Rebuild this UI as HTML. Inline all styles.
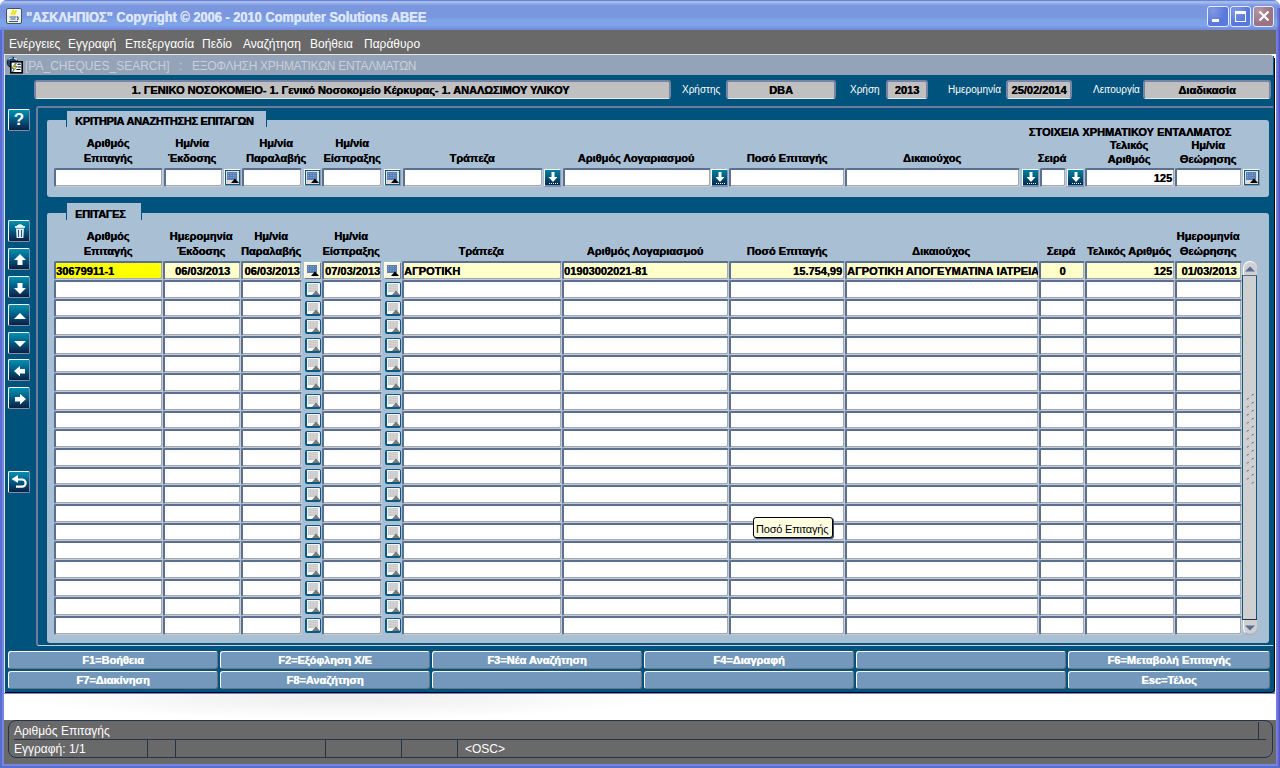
<!DOCTYPE html><html><head><meta charset="utf-8"><style>
*{margin:0;padding:0;box-sizing:border-box}
html,body{width:1280px;height:768px;overflow:hidden;background:#fff;font-family:"Liberation Sans",sans-serif}
div,svg{position:absolute}
.lb{font-weight:bold;font-size:11px;color:#000;white-space:nowrap;line-height:13px;text-shadow:0.35px 0 0 #000}
.wl{font-size:10px;color:#fff;white-space:nowrap;line-height:13px}
.fld{border-top:2px solid #5B6F92;border-left:2px solid #5B6F92;border-right:1px solid #CACACA;border-bottom:1px solid #CACACA;border-radius:2px;box-shadow:inset -1px -1px 0 #9AAAC0}
.ft{left:0;right:0;top:2px;font-weight:bold;font-size:11px;line-height:13px;white-space:nowrap;color:#000;overflow:hidden;text-shadow:0.35px 0 0 #000}
.gf{border:2px solid #7884A6;border-bottom:1px solid #E8E8E8;border-radius:3px;background:#C0C0C0}
.btn{background:#7398BC;border-top:1px solid #fff;border-left:1px solid #fff;border-right:1px solid #6A7484;border-bottom:1px solid #6A7484;border-radius:3px;color:#fff;font-weight:bold;font-size:11px;text-align:center;line-height:17px;white-space:nowrap;text-shadow:0.35px 0 0 #fff}
.menu{font-size:12px;color:#fff;white-space:nowrap;line-height:14px}
.tb{left:8px;width:22px;height:22px;border-top:1px solid #fff;border-left:1px solid #fff;border-right:1px solid #8090A8;border-bottom:1px solid #8090A8;border-radius:2px;background:linear-gradient(#0090B0 0%,#006088 45%,#0A3058 85%,#0A2040 100%)}
</style></head><body>
<div style="left:0;top:0;width:1280px;height:768px;background:#7088DE;border-radius:7px 7px 0 0"></div>
<div style="left:0;top:30px;width:2px;height:738px;background:#5A6CD0"></div>
<div style="left:1276px;top:6px;width:4px;height:762px;background:linear-gradient(to right,#7888E0,#6A70D8 50%,#5048C0)"></div>
<div style="left:0;top:766px;width:1280px;height:2px;background:#5A6CD0"></div>
<div style="left:0;top:0;width:1280px;height:30px;border-radius:7px 7px 0 0;background:linear-gradient(to bottom,#6585DA 0px,#6585DA 1px,#A2B9E9 1px,#A2B9E9 3px,#8AA6E5 4px,#7A96DF 6px,#7A96DF 17px,#7FA3E7 20px,#7FA3E7 26px,#7890E2 28px,#7088E0 30px)"></div>
<div style="left:1277px;top:8px;width:3px;height:22px;background:linear-gradient(to right,rgba(80,72,192,0.2),rgba(80,72,192,0.8))"></div>
<div style="left:6px;top:8px;width:16px;height:16px;background:linear-gradient(#FAFAFA,#ECECE4);border:1px solid #3A5A5A;border-radius:2px"></div>
<svg style="left:7px;top:9px" width="14" height="14"><path d="M6.5 1.5L4.5 5M9 2L7 5.5" stroke="#F0E000" stroke-width="1.8" stroke-linecap="round"/><path d="M2.5 8h7M3.5 10h5M2 12.5h9" stroke="#3A5A8A" stroke-width="1"/><path d="M10 7.5q2.5 1.5 0 3.5" stroke="#3A5A8A" stroke-width="1.2" fill="none"/></svg>
<div class="title" style="left:26px;top:9px;font-weight:bold;font-size:14px;letter-spacing:0px;transform:scaleX(0.915);transform-origin:0 0;color:#DCE6F8;white-space:nowrap;line-height:17px;text-shadow:0.4px 0 0 #DCE6F8">"ΑΣΚΛΗΠΙΟΣ" Copyright © 2006 - 2010 Computer Solutions ABEE</div>
<div style="left:1207px;top:6px;width:22px;height:21px;background:radial-gradient(circle at 25% 20%,rgba(255,255,255,0.25),rgba(255,255,255,0) 60%),#5878DC;border:1px solid #E4ECFF;border-radius:3px"></div>
<div style="left:1230px;top:6px;width:21px;height:21px;background:radial-gradient(circle at 25% 20%,rgba(255,255,255,0.25),rgba(255,255,255,0) 60%),#5878DC;border:1px solid #E4ECFF;border-radius:3px"></div>
<div style="left:1253px;top:6px;width:21px;height:21px;background:radial-gradient(circle at 25% 20%,rgba(255,255,255,0.25),rgba(255,255,255,0) 60%),#9A7482;border:1px solid #E4ECFF;border-radius:3px"></div>
<div style="left:1212px;top:19px;width:7px;height:3px;background:#fff"></div>
<div style="left:1235px;top:11px;width:11px;height:11px;border:1px solid #fff;border-top-width:3px"></div>
<svg style="left:1258px;top:10px" width="12" height="12"><path d="M1.5 1.5L10.5 10.5M10.5 1.5L1.5 10.5" stroke="#fff" stroke-width="2"/></svg>
<div style="left:4px;top:30px;width:1272px;height:24px;background:#696969"></div>
<div class="menu" style="left:9px;top:37px;">Ενέργειες</div>
<div class="menu" style="left:68px;top:37px;">Εγγραφή</div>
<div class="menu" style="left:125px;top:37px;">Επεξεργασία</div>
<div class="menu" style="left:202px;top:37px;">Πεδίο</div>
<div class="menu" style="left:243px;top:37px;">Αναζήτηση</div>
<div class="menu" style="left:310px;top:37px;">Βοήθεια</div>
<div class="menu" style="left:364px;top:37px;">Παράθυρο</div>
<div style="left:4px;top:54px;width:1272px;height:21px;background:#fff"></div><div style="left:4px;top:54px;width:1269px;height:21px;background:#94A3B8;border-top:1px solid #E4E4E4;border-left:1px solid #E4E4E4;border-radius:0 3px 0 0"></div><div style="left:1273px;top:56px;width:1px;height:20px;background:#005880"></div><div style="left:1274px;top:58px;width:1px;height:18px;background:#000"></div>
<svg style="left:6px;top:56px" width="18" height="18"><circle cx="6.5" cy="6.5" r="5.3" fill="#1A4A7A" stroke="#000" stroke-width="0.8"/><path d="M2.5 3.5q2 -2 4 -1.5M8 2q2 0.5 3 2" stroke="#C8D8F0" stroke-width="1.4" fill="none"/><rect x="4.8" y="5.8" width="11.4" height="11" fill="#fff" stroke="#000" stroke-width="1.6"/><path d="M9.5 7L5.5 12.5H8L6.5 16L11 10.5H8.5L10.5 7Z" fill="#F0F000" stroke="#1A3A8A" stroke-width="0.6"/><path d="M11.5 8.5h3M11.5 11h3.5M10.5 13.5h4" stroke="#000" stroke-width="1"/><rect x="12" y="7.5" width="2.5" height="1.5" fill="#1A4A8A"/></svg>
<div class="menu" style="left:25px;top:59px;color:#C8CFDA">[PA_CHEQUES_SEARCH]</div>
<div class="menu" style="left:179px;top:59px;color:#C8CFDA">:</div>
<div class="menu" style="left:192px;top:59px;color:#C8CFDA;letter-spacing:-0.3px">ΕΞΟΦΛΗΣΗ ΧΡΗΜΑΤΙΚΩΝ ΕΝΤΑΛΜΑΤΩΝ</div>
<div style="left:5px;top:75px;width:1270px;height:618px;background:#00537C;border-right:1px solid #000;border-bottom:1px solid #000;border-radius:0 0 4px 0"></div>
<div style="left:4px;top:75px;width:1px;height:618px;background:#E4DCD8"></div>
<div style="left:1275px;top:54px;width:1px;height:640px;background:#fff"></div>
<div class="gf" style="left:34px;top:80px;width:637px;height:19px"><div class="lb" style="left:0;right:0;top:2px;text-align:center"><span style="letter-spacing:-0.04px;position:relative;left:-2px">1. ΓΕΝΙΚΟ ΝΟΣΟΚΟΜΕΙΟ- 1. Γενικό Νοσοκομείο Κέρκυρας- 1. ΑΝΑΛΩΣΙΜΟΥ ΥΛΙΚΟΥ</span></div></div>
<div class="wl" style="left:682px;top:83px;">Χρήστης</div>
<div class="gf" style="left:726px;top:80px;width:110px;height:19px"><div class="lb" style="left:0;right:0;top:2px;text-align:center">DBA</div></div>
<div class="wl" style="left:850px;top:83px;">Χρήση</div>
<div class="gf" style="left:886px;top:80px;width:42px;height:19px"><div class="lb" style="left:0;right:0;top:2px;text-align:center">2013</div></div>
<div class="wl" style="left:948px;top:83px;">Ημερομηνία</div>
<div class="gf" style="left:1006px;top:80px;width:66px;height:19px"><div class="lb" style="left:0;right:0;top:2px;text-align:center">25/02/2014</div></div>
<div class="wl" style="left:1093px;top:83px;">Λειτουργία</div>
<div class="gf" style="left:1143px;top:80px;width:128px;height:19px"><div class="lb" style="left:0;right:0;top:2px;text-align:center">Διαδικασία</div></div>
<div style="left:36px;top:106px;width:1237px;height:540px;border:2px solid #6E7C9C;border-right:none;border-bottom:1px solid #C8CCD4;border-radius:3px 0 0 3px"></div>
<div style="left:47px;top:120px;width:1222px;height:77px;background:#A9BFD4;border-radius:2px 3px 3px 3px"></div>
<div style="left:67px;top:111px;width:199px;height:11px;background:#A9BFD4"></div>
<div class="lb" style="left:75px;top:115px;letter-spacing:-0.3px">ΚΡΙΤΗΡΙΑ ΑΝΑΖΗΤΗΣΗΣ ΕΠΙΤΑΓΩΝ</div>
<div style="left:66px;top:120px;width:1px;height:7px;background:#00537C"></div>
<div style="left:266px;top:120px;width:1px;height:7px;background:#00537C"></div>
<div style="left:47px;top:213px;width:1222px;height:430px;background:#A9BFD4;border-radius:2px 3px 3px 3px"></div>
<div style="left:67px;top:203px;width:74px;height:12px;background:#A9BFD4"></div>
<div class="lb" style="left:75px;top:208px;letter-spacing:-0.3px">ΕΠΙΤΑΓΕΣ</div>
<div style="left:66px;top:213px;width:1px;height:7px;background:#00537C"></div>
<div style="left:141px;top:213px;width:1px;height:7px;background:#00537C"></div>
<div class="lb" style="left:-12.0px;top:137px;width:240px;text-align:center">Αριθμός</div>
<div class="lb" style="left:-12.0px;top:152px;width:240px;text-align:center">Επιταγής</div>
<div class="lb" style="left:72.0px;top:137px;width:240px;text-align:center">Ημ/νία</div>
<div class="lb" style="left:72.0px;top:152px;width:240px;text-align:center">Έκδοσης</div>
<div class="lb" style="left:156.0px;top:137px;width:240px;text-align:center">Ημ/νία</div>
<div class="lb" style="left:156.0px;top:152px;width:240px;text-align:center">Παραλαβής</div>
<div class="lb" style="left:232.0px;top:137px;width:240px;text-align:center">Ημ/νία</div>
<div class="lb" style="left:232.0px;top:152px;width:240px;text-align:center">Είσπραξης</div>
<div class="lb" style="left:352.0px;top:152px;width:240px;text-align:center">Τράπεζα</div>
<div class="lb" style="left:516.0px;top:152px;width:240px;text-align:center">Αριθμός Λογαριασμού</div>
<div class="lb" style="left:667.0px;top:152px;width:240px;text-align:center">Ποσό Επιταγής</div>
<div class="lb" style="left:812.0px;top:152px;width:240px;text-align:center">Δικαιούχος</div>
<div class="lb" style="left:932.0px;top:152px;width:240px;text-align:center">Σειρά</div>
<div class="lb" style="left:1000.0px;top:126px;width:260px;text-align:center">ΣΤΟΙΧΕΙΑ ΧΡΗΜΑΤΙΚΟΥ ΕΝΤΑΛΜΑΤΟΣ</div>
<div class="lb" style="left:1009.0px;top:139px;width:240px;text-align:center">Τελικός</div>
<div class="lb" style="left:1009.0px;top:153px;width:240px;text-align:center">Αριθμός</div>
<div class="lb" style="left:1088.0px;top:139px;width:240px;text-align:center">Ημ/νία</div>
<div class="lb" style="left:1088.0px;top:153px;width:240px;text-align:center">Θεώρησης</div>
<div class="fld" style="left:54px;top:168px;width:109px;height:19px;background:#fff"><div class="ft" style="text-align:left;padding-left:0px"></div></div>
<div class="fld" style="left:164px;top:168px;width:59px;height:19px;background:#fff"><div class="ft" style="text-align:left;padding-left:0px"></div></div>
<div style="left:224px;top:169px;width:17px;height:17px;border-top:1px solid #fff;border-left:1px solid #fff;border-right:1px solid #8898B0;border-bottom:1px solid #8898B0;background:#0A5A80"><div style="left:1px;top:1px;width:13px;height:13px;background:#E4DCD4"><div style="left:1px;top:1px;width:10px;height:8px;background:#5A7EB8"></div><svg style="left:2px;top:2px" width="8" height="6"><path d="M0.5 0v6M3 0v6M5.5 0v6M8 0v6" stroke="#A8C0E0" stroke-width="0.6" stroke-dasharray="1 1"/></svg><svg style="left:5px;top:7px" width="8" height="5"><path d="M0 5L4 0.5L8 5Z" fill="#000"/></svg></div></div>
<div class="fld" style="left:242px;top:168px;width:60px;height:19px;background:#fff"><div class="ft" style="text-align:left;padding-left:0px"></div></div>
<div style="left:304px;top:169px;width:17px;height:17px;border-top:1px solid #fff;border-left:1px solid #fff;border-right:1px solid #8898B0;border-bottom:1px solid #8898B0;background:#0A5A80"><div style="left:1px;top:1px;width:13px;height:13px;background:#E4DCD4"><div style="left:1px;top:1px;width:10px;height:8px;background:#5A7EB8"></div><svg style="left:2px;top:2px" width="8" height="6"><path d="M0.5 0v6M3 0v6M5.5 0v6M8 0v6" stroke="#A8C0E0" stroke-width="0.6" stroke-dasharray="1 1"/></svg><svg style="left:5px;top:7px" width="8" height="5"><path d="M0 5L4 0.5L8 5Z" fill="#000"/></svg></div></div>
<div class="fld" style="left:322px;top:168px;width:60px;height:19px;background:#fff"><div class="ft" style="text-align:left;padding-left:0px"></div></div>
<div style="left:384px;top:169px;width:17px;height:17px;border-top:1px solid #fff;border-left:1px solid #fff;border-right:1px solid #8898B0;border-bottom:1px solid #8898B0;background:#0A5A80"><div style="left:1px;top:1px;width:13px;height:13px;background:#E4DCD4"><div style="left:1px;top:1px;width:10px;height:8px;background:#5A7EB8"></div><svg style="left:2px;top:2px" width="8" height="6"><path d="M0.5 0v6M3 0v6M5.5 0v6M8 0v6" stroke="#A8C0E0" stroke-width="0.6" stroke-dasharray="1 1"/></svg><svg style="left:5px;top:7px" width="8" height="5"><path d="M0 5L4 0.5L8 5Z" fill="#000"/></svg></div></div>
<div class="fld" style="left:403px;top:168px;width:140px;height:19px;background:#fff"><div class="ft" style="text-align:left;padding-left:0px"></div></div>
<div style="left:544px;top:169px;width:17px;height:18px;border-top:1px solid #fff;border-left:1px solid #fff;border-right:1px solid #8898B0;border-bottom:2px solid #7890B0;background:linear-gradient(#0080A0,#005878 50%,#002850)"><svg style="left:1px;top:1px" width="14" height="14"><path d="M5.5 1h3v5h3l-4.5 5l-4.5-5h3z" fill="#fff"/><path d="M3 12.5h9" stroke="#fff" stroke-width="1" stroke-dasharray="1 1"/></svg></div>
<div class="fld" style="left:563px;top:168px;width:148px;height:19px;background:#fff"><div class="ft" style="text-align:left;padding-left:0px"></div></div>
<div style="left:711px;top:169px;width:17px;height:18px;border-top:1px solid #fff;border-left:1px solid #fff;border-right:1px solid #8898B0;border-bottom:2px solid #7890B0;background:linear-gradient(#0080A0,#005878 50%,#002850)"><svg style="left:1px;top:1px" width="14" height="14"><path d="M5.5 1h3v5h3l-4.5 5l-4.5-5h3z" fill="#fff"/><path d="M3 12.5h9" stroke="#fff" stroke-width="1" stroke-dasharray="1 1"/></svg></div>
<div class="fld" style="left:729px;top:168px;width:116px;height:19px;background:#fff"><div class="ft" style="text-align:left;padding-left:0px"></div></div>
<div class="fld" style="left:845px;top:168px;width:175px;height:19px;background:#fff"><div class="ft" style="text-align:left;padding-left:0px"></div></div>
<div style="left:1022px;top:169px;width:17px;height:18px;border-top:1px solid #fff;border-left:1px solid #fff;border-right:1px solid #8898B0;border-bottom:2px solid #7890B0;background:linear-gradient(#0080A0,#005878 50%,#002850)"><svg style="left:1px;top:1px" width="14" height="14"><path d="M5.5 1h3v5h3l-4.5 5l-4.5-5h3z" fill="#fff"/><path d="M3 12.5h9" stroke="#fff" stroke-width="1" stroke-dasharray="1 1"/></svg></div>
<div class="fld" style="left:1040px;top:168px;width:26px;height:19px;background:#fff"><div class="ft" style="text-align:left;padding-left:0px"></div></div>
<div style="left:1067px;top:169px;width:17px;height:18px;border-top:1px solid #fff;border-left:1px solid #fff;border-right:1px solid #8898B0;border-bottom:2px solid #7890B0;background:linear-gradient(#0080A0,#005878 50%,#002850)"><svg style="left:1px;top:1px" width="14" height="14"><path d="M5.5 1h3v5h3l-4.5 5l-4.5-5h3z" fill="#fff"/><path d="M3 12.5h9" stroke="#fff" stroke-width="1" stroke-dasharray="1 1"/></svg></div>
<div class="fld" style="left:1085px;top:168px;width:90px;height:19px;background:#fff"><div class="ft" style="text-align:right;padding-right:2px">125</div></div>
<div class="fld" style="left:1175px;top:168px;width:67px;height:19px;background:#fff"><div class="ft" style="text-align:left;padding-left:0px"></div></div>
<div style="left:1243px;top:169px;width:17px;height:17px;border-top:1px solid #fff;border-left:1px solid #fff;border-right:1px solid #8898B0;border-bottom:1px solid #8898B0;background:#0A5A80"><div style="left:1px;top:1px;width:13px;height:13px;background:#E4DCD4"><div style="left:1px;top:1px;width:10px;height:8px;background:#5A7EB8"></div><svg style="left:2px;top:2px" width="8" height="6"><path d="M0.5 0v6M3 0v6M5.5 0v6M8 0v6" stroke="#A8C0E0" stroke-width="0.6" stroke-dasharray="1 1"/></svg><svg style="left:5px;top:7px" width="8" height="5"><path d="M0 5L4 0.5L8 5Z" fill="#000"/></svg></div></div>
<div class="lb" style="left:-12.0px;top:230px;width:240px;text-align:center">Αριθμός</div>
<div class="lb" style="left:-12.0px;top:245px;width:240px;text-align:center">Επιταγής</div>
<div class="lb" style="left:81.0px;top:230px;width:240px;text-align:center">Ημερομηνία</div>
<div class="lb" style="left:81.0px;top:245px;width:240px;text-align:center">Έκδοσης</div>
<div class="lb" style="left:151.0px;top:230px;width:240px;text-align:center">Ημ/νία</div>
<div class="lb" style="left:151.0px;top:245px;width:240px;text-align:center">Παραλαβής</div>
<div class="lb" style="left:231.0px;top:230px;width:240px;text-align:center">Ημ/νία</div>
<div class="lb" style="left:231.0px;top:245px;width:240px;text-align:center">Είσπραξης</div>
<div class="lb" style="left:361.0px;top:245px;width:240px;text-align:center">Τράπεζα</div>
<div class="lb" style="left:525.0px;top:245px;width:240px;text-align:center">Αριθμός Λογαριασμού</div>
<div class="lb" style="left:667.0px;top:245px;width:240px;text-align:center">Ποσό Επιταγής</div>
<div class="lb" style="left:821.0px;top:245px;width:240px;text-align:center">Δικαιούχος</div>
<div class="lb" style="left:941.0px;top:245px;width:240px;text-align:center">Σειρά</div>
<div class="lb" style="left:1009.0px;top:245px;width:240px;text-align:center">Τελικός Αριθμός</div>
<div class="lb" style="left:1088.0px;top:230px;width:240px;text-align:center">Ημερομηνία</div>
<div class="lb" style="left:1088.0px;top:245px;width:240px;text-align:center">Θεώρησης</div>
<div class="fld" style="left:54px;top:261px;width:109px;height:19px;background:#FFFF00"><div class="ft" style="text-align:left;padding-left:0px">30679911-1</div></div>
<div class="fld" style="left:163px;top:261px;width:78px;height:19px;background:#FFFFCC"><div class="ft" style="text-align:center;">06/03/2013</div></div>
<div class="fld" style="left:241px;top:261px;width:61px;height:19px;background:#FFFFCC"><div class="ft" style="text-align:center;">06/03/2013</div></div>
<div class="fld" style="left:322px;top:261px;width:60px;height:19px;background:#FFFFCC"><div class="ft" style="text-align:center;">07/03/2013</div></div>
<div class="fld" style="left:402px;top:261px;width:160px;height:19px;background:#FFFFCC"><div class="ft" style="text-align:left;padding-left:0px">ΑΓΡΟΤΙΚΗ</div></div>
<div class="fld" style="left:562px;top:261px;width:167px;height:19px;background:#FFFFCC"><div class="ft" style="text-align:left;padding-left:0px">01903002021-81</div></div>
<div class="fld" style="left:729px;top:261px;width:116px;height:19px;background:#FFFFCC"><div class="ft" style="text-align:right;padding-right:2px">15.754,99</div></div>
<div class="fld" style="left:845px;top:261px;width:194px;height:19px;background:#FFFFCC"><div class="ft" style="text-align:left;padding-left:0px">ΑΓΡΟΤΙΚΗ ΑΠΟΓΕΥΜΑΤΙΝΑ ΙΑΤΡΕΙΑ</div></div>
<div class="fld" style="left:1039px;top:261px;width:46px;height:19px;background:#FFFFCC"><div class="ft" style="text-align:center;">0</div></div>
<div class="fld" style="left:1085px;top:261px;width:90px;height:19px;background:#FFFFCC"><div class="ft" style="text-align:right;padding-right:2px">125</div></div>
<div class="fld" style="left:1175px;top:261px;width:67px;height:19px;background:#FFFFCC"><div class="ft" style="text-align:center;">01/03/2013</div></div>
<div style="left:304px;top:262px;width:17px;height:17px;border-top:1px solid #FFFFF4;border-left:1px solid #FFFFF4;border-right:1px solid #6A7A98;border-bottom:1px solid #6A7A98;background:#F8F6D8"><div style="left:1px;top:1px;width:15px;height:15px"><div style="left:1px;top:1px;width:10px;height:8px;background:#5A7EB8"></div><svg style="left:2px;top:2px" width="8" height="6"><path d="M0.5 0v6M3 0v6M5.5 0v6M8 0v6" stroke="#A8C0E0" stroke-width="0.6" stroke-dasharray="1 1"/></svg><svg style="left:5px;top:7px" width="8" height="5"><path d="M0 5L4 0.5L8 5Z" fill="#000"/></svg></div></div>
<div style="left:384px;top:262px;width:17px;height:17px;border-top:1px solid #FFFFF4;border-left:1px solid #FFFFF4;border-right:1px solid #6A7A98;border-bottom:1px solid #6A7A98;background:#F8F6D8"><div style="left:1px;top:1px;width:15px;height:15px"><div style="left:1px;top:1px;width:10px;height:8px;background:#5A7EB8"></div><svg style="left:2px;top:2px" width="8" height="6"><path d="M0.5 0v6M3 0v6M5.5 0v6M8 0v6" stroke="#A8C0E0" stroke-width="0.6" stroke-dasharray="1 1"/></svg><svg style="left:5px;top:7px" width="8" height="5"><path d="M0 5L4 0.5L8 5Z" fill="#000"/></svg></div></div>
<div class="fld" style="left:54px;top:280px;width:109px;height:19px;background:#fff"><div class="ft" style="text-align:left;padding-left:0px"></div></div>
<div class="fld" style="left:163px;top:280px;width:78px;height:19px;background:#fff"><div class="ft" style="text-align:left;padding-left:0px"></div></div>
<div class="fld" style="left:241px;top:280px;width:61px;height:19px;background:#fff"><div class="ft" style="text-align:left;padding-left:0px"></div></div>
<div class="fld" style="left:322px;top:280px;width:60px;height:19px;background:#fff"><div class="ft" style="text-align:left;padding-left:0px"></div></div>
<div class="fld" style="left:402px;top:280px;width:160px;height:19px;background:#fff"><div class="ft" style="text-align:left;padding-left:0px"></div></div>
<div class="fld" style="left:562px;top:280px;width:167px;height:19px;background:#fff"><div class="ft" style="text-align:left;padding-left:0px"></div></div>
<div class="fld" style="left:729px;top:280px;width:116px;height:19px;background:#fff"><div class="ft" style="text-align:left;padding-left:0px"></div></div>
<div class="fld" style="left:845px;top:280px;width:194px;height:19px;background:#fff"><div class="ft" style="text-align:left;padding-left:0px"></div></div>
<div class="fld" style="left:1039px;top:280px;width:46px;height:19px;background:#fff"><div class="ft" style="text-align:left;padding-left:0px"></div></div>
<div class="fld" style="left:1085px;top:280px;width:90px;height:19px;background:#fff"><div class="ft" style="text-align:left;padding-left:0px"></div></div>
<div class="fld" style="left:1175px;top:280px;width:67px;height:19px;background:#fff"><div class="ft" style="text-align:left;padding-left:0px"></div></div>
<div style="left:305px;top:282px;width:16px;height:15px;border:2px solid #0A5A80;border-top-width:1.5px;border-right-width:1.5px;border-radius:2px;background:#F6F6F6"><div style="left:0;top:0;width:13px;height:13px"><div style="left:1px;top:1px;width:10px;height:8px;background:#CCCCCC"></div><svg style="left:2px;top:2px" width="8" height="6"><path d="M0.5 0v6M3 0v6M5.5 0v6M8 0v6" stroke="#E8E8E8" stroke-width="0.6" stroke-dasharray="1 1"/></svg><svg style="left:5px;top:7px" width="8" height="5"><path d="M0 5L4 0.5L8 5Z" fill="#7A7A7A"/></svg></div></div>
<div style="left:385px;top:282px;width:16px;height:15px;border:2px solid #0A5A80;border-top-width:1.5px;border-right-width:1.5px;border-radius:2px;background:#F6F6F6"><div style="left:0;top:0;width:13px;height:13px"><div style="left:1px;top:1px;width:10px;height:8px;background:#CCCCCC"></div><svg style="left:2px;top:2px" width="8" height="6"><path d="M0.5 0v6M3 0v6M5.5 0v6M8 0v6" stroke="#E8E8E8" stroke-width="0.6" stroke-dasharray="1 1"/></svg><svg style="left:5px;top:7px" width="8" height="5"><path d="M0 5L4 0.5L8 5Z" fill="#7A7A7A"/></svg></div></div>
<div class="fld" style="left:54px;top:299px;width:109px;height:18px;background:#fff"><div class="ft" style="text-align:left;padding-left:0px"></div></div>
<div class="fld" style="left:163px;top:299px;width:78px;height:18px;background:#fff"><div class="ft" style="text-align:left;padding-left:0px"></div></div>
<div class="fld" style="left:241px;top:299px;width:61px;height:18px;background:#fff"><div class="ft" style="text-align:left;padding-left:0px"></div></div>
<div class="fld" style="left:322px;top:299px;width:60px;height:18px;background:#fff"><div class="ft" style="text-align:left;padding-left:0px"></div></div>
<div class="fld" style="left:402px;top:299px;width:160px;height:18px;background:#fff"><div class="ft" style="text-align:left;padding-left:0px"></div></div>
<div class="fld" style="left:562px;top:299px;width:167px;height:18px;background:#fff"><div class="ft" style="text-align:left;padding-left:0px"></div></div>
<div class="fld" style="left:729px;top:299px;width:116px;height:18px;background:#fff"><div class="ft" style="text-align:left;padding-left:0px"></div></div>
<div class="fld" style="left:845px;top:299px;width:194px;height:18px;background:#fff"><div class="ft" style="text-align:left;padding-left:0px"></div></div>
<div class="fld" style="left:1039px;top:299px;width:46px;height:18px;background:#fff"><div class="ft" style="text-align:left;padding-left:0px"></div></div>
<div class="fld" style="left:1085px;top:299px;width:90px;height:18px;background:#fff"><div class="ft" style="text-align:left;padding-left:0px"></div></div>
<div class="fld" style="left:1175px;top:299px;width:67px;height:18px;background:#fff"><div class="ft" style="text-align:left;padding-left:0px"></div></div>
<div style="left:305px;top:301px;width:16px;height:15px;border:2px solid #0A5A80;border-top-width:1.5px;border-right-width:1.5px;border-radius:2px;background:#F6F6F6"><div style="left:0;top:0;width:13px;height:13px"><div style="left:1px;top:1px;width:10px;height:8px;background:#CCCCCC"></div><svg style="left:2px;top:2px" width="8" height="6"><path d="M0.5 0v6M3 0v6M5.5 0v6M8 0v6" stroke="#E8E8E8" stroke-width="0.6" stroke-dasharray="1 1"/></svg><svg style="left:5px;top:7px" width="8" height="5"><path d="M0 5L4 0.5L8 5Z" fill="#7A7A7A"/></svg></div></div>
<div style="left:385px;top:301px;width:16px;height:15px;border:2px solid #0A5A80;border-top-width:1.5px;border-right-width:1.5px;border-radius:2px;background:#F6F6F6"><div style="left:0;top:0;width:13px;height:13px"><div style="left:1px;top:1px;width:10px;height:8px;background:#CCCCCC"></div><svg style="left:2px;top:2px" width="8" height="6"><path d="M0.5 0v6M3 0v6M5.5 0v6M8 0v6" stroke="#E8E8E8" stroke-width="0.6" stroke-dasharray="1 1"/></svg><svg style="left:5px;top:7px" width="8" height="5"><path d="M0 5L4 0.5L8 5Z" fill="#7A7A7A"/></svg></div></div>
<div class="fld" style="left:54px;top:317px;width:109px;height:19px;background:#fff"><div class="ft" style="text-align:left;padding-left:0px"></div></div>
<div class="fld" style="left:163px;top:317px;width:78px;height:19px;background:#fff"><div class="ft" style="text-align:left;padding-left:0px"></div></div>
<div class="fld" style="left:241px;top:317px;width:61px;height:19px;background:#fff"><div class="ft" style="text-align:left;padding-left:0px"></div></div>
<div class="fld" style="left:322px;top:317px;width:60px;height:19px;background:#fff"><div class="ft" style="text-align:left;padding-left:0px"></div></div>
<div class="fld" style="left:402px;top:317px;width:160px;height:19px;background:#fff"><div class="ft" style="text-align:left;padding-left:0px"></div></div>
<div class="fld" style="left:562px;top:317px;width:167px;height:19px;background:#fff"><div class="ft" style="text-align:left;padding-left:0px"></div></div>
<div class="fld" style="left:729px;top:317px;width:116px;height:19px;background:#fff"><div class="ft" style="text-align:left;padding-left:0px"></div></div>
<div class="fld" style="left:845px;top:317px;width:194px;height:19px;background:#fff"><div class="ft" style="text-align:left;padding-left:0px"></div></div>
<div class="fld" style="left:1039px;top:317px;width:46px;height:19px;background:#fff"><div class="ft" style="text-align:left;padding-left:0px"></div></div>
<div class="fld" style="left:1085px;top:317px;width:90px;height:19px;background:#fff"><div class="ft" style="text-align:left;padding-left:0px"></div></div>
<div class="fld" style="left:1175px;top:317px;width:67px;height:19px;background:#fff"><div class="ft" style="text-align:left;padding-left:0px"></div></div>
<div style="left:305px;top:319px;width:16px;height:15px;border:2px solid #0A5A80;border-top-width:1.5px;border-right-width:1.5px;border-radius:2px;background:#F6F6F6"><div style="left:0;top:0;width:13px;height:13px"><div style="left:1px;top:1px;width:10px;height:8px;background:#CCCCCC"></div><svg style="left:2px;top:2px" width="8" height="6"><path d="M0.5 0v6M3 0v6M5.5 0v6M8 0v6" stroke="#E8E8E8" stroke-width="0.6" stroke-dasharray="1 1"/></svg><svg style="left:5px;top:7px" width="8" height="5"><path d="M0 5L4 0.5L8 5Z" fill="#7A7A7A"/></svg></div></div>
<div style="left:385px;top:319px;width:16px;height:15px;border:2px solid #0A5A80;border-top-width:1.5px;border-right-width:1.5px;border-radius:2px;background:#F6F6F6"><div style="left:0;top:0;width:13px;height:13px"><div style="left:1px;top:1px;width:10px;height:8px;background:#CCCCCC"></div><svg style="left:2px;top:2px" width="8" height="6"><path d="M0.5 0v6M3 0v6M5.5 0v6M8 0v6" stroke="#E8E8E8" stroke-width="0.6" stroke-dasharray="1 1"/></svg><svg style="left:5px;top:7px" width="8" height="5"><path d="M0 5L4 0.5L8 5Z" fill="#7A7A7A"/></svg></div></div>
<div class="fld" style="left:54px;top:336px;width:109px;height:19px;background:#fff"><div class="ft" style="text-align:left;padding-left:0px"></div></div>
<div class="fld" style="left:163px;top:336px;width:78px;height:19px;background:#fff"><div class="ft" style="text-align:left;padding-left:0px"></div></div>
<div class="fld" style="left:241px;top:336px;width:61px;height:19px;background:#fff"><div class="ft" style="text-align:left;padding-left:0px"></div></div>
<div class="fld" style="left:322px;top:336px;width:60px;height:19px;background:#fff"><div class="ft" style="text-align:left;padding-left:0px"></div></div>
<div class="fld" style="left:402px;top:336px;width:160px;height:19px;background:#fff"><div class="ft" style="text-align:left;padding-left:0px"></div></div>
<div class="fld" style="left:562px;top:336px;width:167px;height:19px;background:#fff"><div class="ft" style="text-align:left;padding-left:0px"></div></div>
<div class="fld" style="left:729px;top:336px;width:116px;height:19px;background:#fff"><div class="ft" style="text-align:left;padding-left:0px"></div></div>
<div class="fld" style="left:845px;top:336px;width:194px;height:19px;background:#fff"><div class="ft" style="text-align:left;padding-left:0px"></div></div>
<div class="fld" style="left:1039px;top:336px;width:46px;height:19px;background:#fff"><div class="ft" style="text-align:left;padding-left:0px"></div></div>
<div class="fld" style="left:1085px;top:336px;width:90px;height:19px;background:#fff"><div class="ft" style="text-align:left;padding-left:0px"></div></div>
<div class="fld" style="left:1175px;top:336px;width:67px;height:19px;background:#fff"><div class="ft" style="text-align:left;padding-left:0px"></div></div>
<div style="left:305px;top:338px;width:16px;height:15px;border:2px solid #0A5A80;border-top-width:1.5px;border-right-width:1.5px;border-radius:2px;background:#F6F6F6"><div style="left:0;top:0;width:13px;height:13px"><div style="left:1px;top:1px;width:10px;height:8px;background:#CCCCCC"></div><svg style="left:2px;top:2px" width="8" height="6"><path d="M0.5 0v6M3 0v6M5.5 0v6M8 0v6" stroke="#E8E8E8" stroke-width="0.6" stroke-dasharray="1 1"/></svg><svg style="left:5px;top:7px" width="8" height="5"><path d="M0 5L4 0.5L8 5Z" fill="#7A7A7A"/></svg></div></div>
<div style="left:385px;top:338px;width:16px;height:15px;border:2px solid #0A5A80;border-top-width:1.5px;border-right-width:1.5px;border-radius:2px;background:#F6F6F6"><div style="left:0;top:0;width:13px;height:13px"><div style="left:1px;top:1px;width:10px;height:8px;background:#CCCCCC"></div><svg style="left:2px;top:2px" width="8" height="6"><path d="M0.5 0v6M3 0v6M5.5 0v6M8 0v6" stroke="#E8E8E8" stroke-width="0.6" stroke-dasharray="1 1"/></svg><svg style="left:5px;top:7px" width="8" height="5"><path d="M0 5L4 0.5L8 5Z" fill="#7A7A7A"/></svg></div></div>
<div class="fld" style="left:54px;top:355px;width:109px;height:18px;background:#fff"><div class="ft" style="text-align:left;padding-left:0px"></div></div>
<div class="fld" style="left:163px;top:355px;width:78px;height:18px;background:#fff"><div class="ft" style="text-align:left;padding-left:0px"></div></div>
<div class="fld" style="left:241px;top:355px;width:61px;height:18px;background:#fff"><div class="ft" style="text-align:left;padding-left:0px"></div></div>
<div class="fld" style="left:322px;top:355px;width:60px;height:18px;background:#fff"><div class="ft" style="text-align:left;padding-left:0px"></div></div>
<div class="fld" style="left:402px;top:355px;width:160px;height:18px;background:#fff"><div class="ft" style="text-align:left;padding-left:0px"></div></div>
<div class="fld" style="left:562px;top:355px;width:167px;height:18px;background:#fff"><div class="ft" style="text-align:left;padding-left:0px"></div></div>
<div class="fld" style="left:729px;top:355px;width:116px;height:18px;background:#fff"><div class="ft" style="text-align:left;padding-left:0px"></div></div>
<div class="fld" style="left:845px;top:355px;width:194px;height:18px;background:#fff"><div class="ft" style="text-align:left;padding-left:0px"></div></div>
<div class="fld" style="left:1039px;top:355px;width:46px;height:18px;background:#fff"><div class="ft" style="text-align:left;padding-left:0px"></div></div>
<div class="fld" style="left:1085px;top:355px;width:90px;height:18px;background:#fff"><div class="ft" style="text-align:left;padding-left:0px"></div></div>
<div class="fld" style="left:1175px;top:355px;width:67px;height:18px;background:#fff"><div class="ft" style="text-align:left;padding-left:0px"></div></div>
<div style="left:305px;top:357px;width:16px;height:15px;border:2px solid #0A5A80;border-top-width:1.5px;border-right-width:1.5px;border-radius:2px;background:#F6F6F6"><div style="left:0;top:0;width:13px;height:13px"><div style="left:1px;top:1px;width:10px;height:8px;background:#CCCCCC"></div><svg style="left:2px;top:2px" width="8" height="6"><path d="M0.5 0v6M3 0v6M5.5 0v6M8 0v6" stroke="#E8E8E8" stroke-width="0.6" stroke-dasharray="1 1"/></svg><svg style="left:5px;top:7px" width="8" height="5"><path d="M0 5L4 0.5L8 5Z" fill="#7A7A7A"/></svg></div></div>
<div style="left:385px;top:357px;width:16px;height:15px;border:2px solid #0A5A80;border-top-width:1.5px;border-right-width:1.5px;border-radius:2px;background:#F6F6F6"><div style="left:0;top:0;width:13px;height:13px"><div style="left:1px;top:1px;width:10px;height:8px;background:#CCCCCC"></div><svg style="left:2px;top:2px" width="8" height="6"><path d="M0.5 0v6M3 0v6M5.5 0v6M8 0v6" stroke="#E8E8E8" stroke-width="0.6" stroke-dasharray="1 1"/></svg><svg style="left:5px;top:7px" width="8" height="5"><path d="M0 5L4 0.5L8 5Z" fill="#7A7A7A"/></svg></div></div>
<div class="fld" style="left:54px;top:373px;width:109px;height:19px;background:#fff"><div class="ft" style="text-align:left;padding-left:0px"></div></div>
<div class="fld" style="left:163px;top:373px;width:78px;height:19px;background:#fff"><div class="ft" style="text-align:left;padding-left:0px"></div></div>
<div class="fld" style="left:241px;top:373px;width:61px;height:19px;background:#fff"><div class="ft" style="text-align:left;padding-left:0px"></div></div>
<div class="fld" style="left:322px;top:373px;width:60px;height:19px;background:#fff"><div class="ft" style="text-align:left;padding-left:0px"></div></div>
<div class="fld" style="left:402px;top:373px;width:160px;height:19px;background:#fff"><div class="ft" style="text-align:left;padding-left:0px"></div></div>
<div class="fld" style="left:562px;top:373px;width:167px;height:19px;background:#fff"><div class="ft" style="text-align:left;padding-left:0px"></div></div>
<div class="fld" style="left:729px;top:373px;width:116px;height:19px;background:#fff"><div class="ft" style="text-align:left;padding-left:0px"></div></div>
<div class="fld" style="left:845px;top:373px;width:194px;height:19px;background:#fff"><div class="ft" style="text-align:left;padding-left:0px"></div></div>
<div class="fld" style="left:1039px;top:373px;width:46px;height:19px;background:#fff"><div class="ft" style="text-align:left;padding-left:0px"></div></div>
<div class="fld" style="left:1085px;top:373px;width:90px;height:19px;background:#fff"><div class="ft" style="text-align:left;padding-left:0px"></div></div>
<div class="fld" style="left:1175px;top:373px;width:67px;height:19px;background:#fff"><div class="ft" style="text-align:left;padding-left:0px"></div></div>
<div style="left:305px;top:375px;width:16px;height:15px;border:2px solid #0A5A80;border-top-width:1.5px;border-right-width:1.5px;border-radius:2px;background:#F6F6F6"><div style="left:0;top:0;width:13px;height:13px"><div style="left:1px;top:1px;width:10px;height:8px;background:#CCCCCC"></div><svg style="left:2px;top:2px" width="8" height="6"><path d="M0.5 0v6M3 0v6M5.5 0v6M8 0v6" stroke="#E8E8E8" stroke-width="0.6" stroke-dasharray="1 1"/></svg><svg style="left:5px;top:7px" width="8" height="5"><path d="M0 5L4 0.5L8 5Z" fill="#7A7A7A"/></svg></div></div>
<div style="left:385px;top:375px;width:16px;height:15px;border:2px solid #0A5A80;border-top-width:1.5px;border-right-width:1.5px;border-radius:2px;background:#F6F6F6"><div style="left:0;top:0;width:13px;height:13px"><div style="left:1px;top:1px;width:10px;height:8px;background:#CCCCCC"></div><svg style="left:2px;top:2px" width="8" height="6"><path d="M0.5 0v6M3 0v6M5.5 0v6M8 0v6" stroke="#E8E8E8" stroke-width="0.6" stroke-dasharray="1 1"/></svg><svg style="left:5px;top:7px" width="8" height="5"><path d="M0 5L4 0.5L8 5Z" fill="#7A7A7A"/></svg></div></div>
<div class="fld" style="left:54px;top:392px;width:109px;height:19px;background:#fff"><div class="ft" style="text-align:left;padding-left:0px"></div></div>
<div class="fld" style="left:163px;top:392px;width:78px;height:19px;background:#fff"><div class="ft" style="text-align:left;padding-left:0px"></div></div>
<div class="fld" style="left:241px;top:392px;width:61px;height:19px;background:#fff"><div class="ft" style="text-align:left;padding-left:0px"></div></div>
<div class="fld" style="left:322px;top:392px;width:60px;height:19px;background:#fff"><div class="ft" style="text-align:left;padding-left:0px"></div></div>
<div class="fld" style="left:402px;top:392px;width:160px;height:19px;background:#fff"><div class="ft" style="text-align:left;padding-left:0px"></div></div>
<div class="fld" style="left:562px;top:392px;width:167px;height:19px;background:#fff"><div class="ft" style="text-align:left;padding-left:0px"></div></div>
<div class="fld" style="left:729px;top:392px;width:116px;height:19px;background:#fff"><div class="ft" style="text-align:left;padding-left:0px"></div></div>
<div class="fld" style="left:845px;top:392px;width:194px;height:19px;background:#fff"><div class="ft" style="text-align:left;padding-left:0px"></div></div>
<div class="fld" style="left:1039px;top:392px;width:46px;height:19px;background:#fff"><div class="ft" style="text-align:left;padding-left:0px"></div></div>
<div class="fld" style="left:1085px;top:392px;width:90px;height:19px;background:#fff"><div class="ft" style="text-align:left;padding-left:0px"></div></div>
<div class="fld" style="left:1175px;top:392px;width:67px;height:19px;background:#fff"><div class="ft" style="text-align:left;padding-left:0px"></div></div>
<div style="left:305px;top:394px;width:16px;height:15px;border:2px solid #0A5A80;border-top-width:1.5px;border-right-width:1.5px;border-radius:2px;background:#F6F6F6"><div style="left:0;top:0;width:13px;height:13px"><div style="left:1px;top:1px;width:10px;height:8px;background:#CCCCCC"></div><svg style="left:2px;top:2px" width="8" height="6"><path d="M0.5 0v6M3 0v6M5.5 0v6M8 0v6" stroke="#E8E8E8" stroke-width="0.6" stroke-dasharray="1 1"/></svg><svg style="left:5px;top:7px" width="8" height="5"><path d="M0 5L4 0.5L8 5Z" fill="#7A7A7A"/></svg></div></div>
<div style="left:385px;top:394px;width:16px;height:15px;border:2px solid #0A5A80;border-top-width:1.5px;border-right-width:1.5px;border-radius:2px;background:#F6F6F6"><div style="left:0;top:0;width:13px;height:13px"><div style="left:1px;top:1px;width:10px;height:8px;background:#CCCCCC"></div><svg style="left:2px;top:2px" width="8" height="6"><path d="M0.5 0v6M3 0v6M5.5 0v6M8 0v6" stroke="#E8E8E8" stroke-width="0.6" stroke-dasharray="1 1"/></svg><svg style="left:5px;top:7px" width="8" height="5"><path d="M0 5L4 0.5L8 5Z" fill="#7A7A7A"/></svg></div></div>
<div class="fld" style="left:54px;top:411px;width:109px;height:18px;background:#fff"><div class="ft" style="text-align:left;padding-left:0px"></div></div>
<div class="fld" style="left:163px;top:411px;width:78px;height:18px;background:#fff"><div class="ft" style="text-align:left;padding-left:0px"></div></div>
<div class="fld" style="left:241px;top:411px;width:61px;height:18px;background:#fff"><div class="ft" style="text-align:left;padding-left:0px"></div></div>
<div class="fld" style="left:322px;top:411px;width:60px;height:18px;background:#fff"><div class="ft" style="text-align:left;padding-left:0px"></div></div>
<div class="fld" style="left:402px;top:411px;width:160px;height:18px;background:#fff"><div class="ft" style="text-align:left;padding-left:0px"></div></div>
<div class="fld" style="left:562px;top:411px;width:167px;height:18px;background:#fff"><div class="ft" style="text-align:left;padding-left:0px"></div></div>
<div class="fld" style="left:729px;top:411px;width:116px;height:18px;background:#fff"><div class="ft" style="text-align:left;padding-left:0px"></div></div>
<div class="fld" style="left:845px;top:411px;width:194px;height:18px;background:#fff"><div class="ft" style="text-align:left;padding-left:0px"></div></div>
<div class="fld" style="left:1039px;top:411px;width:46px;height:18px;background:#fff"><div class="ft" style="text-align:left;padding-left:0px"></div></div>
<div class="fld" style="left:1085px;top:411px;width:90px;height:18px;background:#fff"><div class="ft" style="text-align:left;padding-left:0px"></div></div>
<div class="fld" style="left:1175px;top:411px;width:67px;height:18px;background:#fff"><div class="ft" style="text-align:left;padding-left:0px"></div></div>
<div style="left:305px;top:413px;width:16px;height:15px;border:2px solid #0A5A80;border-top-width:1.5px;border-right-width:1.5px;border-radius:2px;background:#F6F6F6"><div style="left:0;top:0;width:13px;height:13px"><div style="left:1px;top:1px;width:10px;height:8px;background:#CCCCCC"></div><svg style="left:2px;top:2px" width="8" height="6"><path d="M0.5 0v6M3 0v6M5.5 0v6M8 0v6" stroke="#E8E8E8" stroke-width="0.6" stroke-dasharray="1 1"/></svg><svg style="left:5px;top:7px" width="8" height="5"><path d="M0 5L4 0.5L8 5Z" fill="#7A7A7A"/></svg></div></div>
<div style="left:385px;top:413px;width:16px;height:15px;border:2px solid #0A5A80;border-top-width:1.5px;border-right-width:1.5px;border-radius:2px;background:#F6F6F6"><div style="left:0;top:0;width:13px;height:13px"><div style="left:1px;top:1px;width:10px;height:8px;background:#CCCCCC"></div><svg style="left:2px;top:2px" width="8" height="6"><path d="M0.5 0v6M3 0v6M5.5 0v6M8 0v6" stroke="#E8E8E8" stroke-width="0.6" stroke-dasharray="1 1"/></svg><svg style="left:5px;top:7px" width="8" height="5"><path d="M0 5L4 0.5L8 5Z" fill="#7A7A7A"/></svg></div></div>
<div class="fld" style="left:54px;top:429px;width:109px;height:19px;background:#fff"><div class="ft" style="text-align:left;padding-left:0px"></div></div>
<div class="fld" style="left:163px;top:429px;width:78px;height:19px;background:#fff"><div class="ft" style="text-align:left;padding-left:0px"></div></div>
<div class="fld" style="left:241px;top:429px;width:61px;height:19px;background:#fff"><div class="ft" style="text-align:left;padding-left:0px"></div></div>
<div class="fld" style="left:322px;top:429px;width:60px;height:19px;background:#fff"><div class="ft" style="text-align:left;padding-left:0px"></div></div>
<div class="fld" style="left:402px;top:429px;width:160px;height:19px;background:#fff"><div class="ft" style="text-align:left;padding-left:0px"></div></div>
<div class="fld" style="left:562px;top:429px;width:167px;height:19px;background:#fff"><div class="ft" style="text-align:left;padding-left:0px"></div></div>
<div class="fld" style="left:729px;top:429px;width:116px;height:19px;background:#fff"><div class="ft" style="text-align:left;padding-left:0px"></div></div>
<div class="fld" style="left:845px;top:429px;width:194px;height:19px;background:#fff"><div class="ft" style="text-align:left;padding-left:0px"></div></div>
<div class="fld" style="left:1039px;top:429px;width:46px;height:19px;background:#fff"><div class="ft" style="text-align:left;padding-left:0px"></div></div>
<div class="fld" style="left:1085px;top:429px;width:90px;height:19px;background:#fff"><div class="ft" style="text-align:left;padding-left:0px"></div></div>
<div class="fld" style="left:1175px;top:429px;width:67px;height:19px;background:#fff"><div class="ft" style="text-align:left;padding-left:0px"></div></div>
<div style="left:305px;top:431px;width:16px;height:15px;border:2px solid #0A5A80;border-top-width:1.5px;border-right-width:1.5px;border-radius:2px;background:#F6F6F6"><div style="left:0;top:0;width:13px;height:13px"><div style="left:1px;top:1px;width:10px;height:8px;background:#CCCCCC"></div><svg style="left:2px;top:2px" width="8" height="6"><path d="M0.5 0v6M3 0v6M5.5 0v6M8 0v6" stroke="#E8E8E8" stroke-width="0.6" stroke-dasharray="1 1"/></svg><svg style="left:5px;top:7px" width="8" height="5"><path d="M0 5L4 0.5L8 5Z" fill="#7A7A7A"/></svg></div></div>
<div style="left:385px;top:431px;width:16px;height:15px;border:2px solid #0A5A80;border-top-width:1.5px;border-right-width:1.5px;border-radius:2px;background:#F6F6F6"><div style="left:0;top:0;width:13px;height:13px"><div style="left:1px;top:1px;width:10px;height:8px;background:#CCCCCC"></div><svg style="left:2px;top:2px" width="8" height="6"><path d="M0.5 0v6M3 0v6M5.5 0v6M8 0v6" stroke="#E8E8E8" stroke-width="0.6" stroke-dasharray="1 1"/></svg><svg style="left:5px;top:7px" width="8" height="5"><path d="M0 5L4 0.5L8 5Z" fill="#7A7A7A"/></svg></div></div>
<div class="fld" style="left:54px;top:448px;width:109px;height:19px;background:#fff"><div class="ft" style="text-align:left;padding-left:0px"></div></div>
<div class="fld" style="left:163px;top:448px;width:78px;height:19px;background:#fff"><div class="ft" style="text-align:left;padding-left:0px"></div></div>
<div class="fld" style="left:241px;top:448px;width:61px;height:19px;background:#fff"><div class="ft" style="text-align:left;padding-left:0px"></div></div>
<div class="fld" style="left:322px;top:448px;width:60px;height:19px;background:#fff"><div class="ft" style="text-align:left;padding-left:0px"></div></div>
<div class="fld" style="left:402px;top:448px;width:160px;height:19px;background:#fff"><div class="ft" style="text-align:left;padding-left:0px"></div></div>
<div class="fld" style="left:562px;top:448px;width:167px;height:19px;background:#fff"><div class="ft" style="text-align:left;padding-left:0px"></div></div>
<div class="fld" style="left:729px;top:448px;width:116px;height:19px;background:#fff"><div class="ft" style="text-align:left;padding-left:0px"></div></div>
<div class="fld" style="left:845px;top:448px;width:194px;height:19px;background:#fff"><div class="ft" style="text-align:left;padding-left:0px"></div></div>
<div class="fld" style="left:1039px;top:448px;width:46px;height:19px;background:#fff"><div class="ft" style="text-align:left;padding-left:0px"></div></div>
<div class="fld" style="left:1085px;top:448px;width:90px;height:19px;background:#fff"><div class="ft" style="text-align:left;padding-left:0px"></div></div>
<div class="fld" style="left:1175px;top:448px;width:67px;height:19px;background:#fff"><div class="ft" style="text-align:left;padding-left:0px"></div></div>
<div style="left:305px;top:450px;width:16px;height:15px;border:2px solid #0A5A80;border-top-width:1.5px;border-right-width:1.5px;border-radius:2px;background:#F6F6F6"><div style="left:0;top:0;width:13px;height:13px"><div style="left:1px;top:1px;width:10px;height:8px;background:#CCCCCC"></div><svg style="left:2px;top:2px" width="8" height="6"><path d="M0.5 0v6M3 0v6M5.5 0v6M8 0v6" stroke="#E8E8E8" stroke-width="0.6" stroke-dasharray="1 1"/></svg><svg style="left:5px;top:7px" width="8" height="5"><path d="M0 5L4 0.5L8 5Z" fill="#7A7A7A"/></svg></div></div>
<div style="left:385px;top:450px;width:16px;height:15px;border:2px solid #0A5A80;border-top-width:1.5px;border-right-width:1.5px;border-radius:2px;background:#F6F6F6"><div style="left:0;top:0;width:13px;height:13px"><div style="left:1px;top:1px;width:10px;height:8px;background:#CCCCCC"></div><svg style="left:2px;top:2px" width="8" height="6"><path d="M0.5 0v6M3 0v6M5.5 0v6M8 0v6" stroke="#E8E8E8" stroke-width="0.6" stroke-dasharray="1 1"/></svg><svg style="left:5px;top:7px" width="8" height="5"><path d="M0 5L4 0.5L8 5Z" fill="#7A7A7A"/></svg></div></div>
<div class="fld" style="left:54px;top:467px;width:109px;height:18px;background:#fff"><div class="ft" style="text-align:left;padding-left:0px"></div></div>
<div class="fld" style="left:163px;top:467px;width:78px;height:18px;background:#fff"><div class="ft" style="text-align:left;padding-left:0px"></div></div>
<div class="fld" style="left:241px;top:467px;width:61px;height:18px;background:#fff"><div class="ft" style="text-align:left;padding-left:0px"></div></div>
<div class="fld" style="left:322px;top:467px;width:60px;height:18px;background:#fff"><div class="ft" style="text-align:left;padding-left:0px"></div></div>
<div class="fld" style="left:402px;top:467px;width:160px;height:18px;background:#fff"><div class="ft" style="text-align:left;padding-left:0px"></div></div>
<div class="fld" style="left:562px;top:467px;width:167px;height:18px;background:#fff"><div class="ft" style="text-align:left;padding-left:0px"></div></div>
<div class="fld" style="left:729px;top:467px;width:116px;height:18px;background:#fff"><div class="ft" style="text-align:left;padding-left:0px"></div></div>
<div class="fld" style="left:845px;top:467px;width:194px;height:18px;background:#fff"><div class="ft" style="text-align:left;padding-left:0px"></div></div>
<div class="fld" style="left:1039px;top:467px;width:46px;height:18px;background:#fff"><div class="ft" style="text-align:left;padding-left:0px"></div></div>
<div class="fld" style="left:1085px;top:467px;width:90px;height:18px;background:#fff"><div class="ft" style="text-align:left;padding-left:0px"></div></div>
<div class="fld" style="left:1175px;top:467px;width:67px;height:18px;background:#fff"><div class="ft" style="text-align:left;padding-left:0px"></div></div>
<div style="left:305px;top:469px;width:16px;height:15px;border:2px solid #0A5A80;border-top-width:1.5px;border-right-width:1.5px;border-radius:2px;background:#F6F6F6"><div style="left:0;top:0;width:13px;height:13px"><div style="left:1px;top:1px;width:10px;height:8px;background:#CCCCCC"></div><svg style="left:2px;top:2px" width="8" height="6"><path d="M0.5 0v6M3 0v6M5.5 0v6M8 0v6" stroke="#E8E8E8" stroke-width="0.6" stroke-dasharray="1 1"/></svg><svg style="left:5px;top:7px" width="8" height="5"><path d="M0 5L4 0.5L8 5Z" fill="#7A7A7A"/></svg></div></div>
<div style="left:385px;top:469px;width:16px;height:15px;border:2px solid #0A5A80;border-top-width:1.5px;border-right-width:1.5px;border-radius:2px;background:#F6F6F6"><div style="left:0;top:0;width:13px;height:13px"><div style="left:1px;top:1px;width:10px;height:8px;background:#CCCCCC"></div><svg style="left:2px;top:2px" width="8" height="6"><path d="M0.5 0v6M3 0v6M5.5 0v6M8 0v6" stroke="#E8E8E8" stroke-width="0.6" stroke-dasharray="1 1"/></svg><svg style="left:5px;top:7px" width="8" height="5"><path d="M0 5L4 0.5L8 5Z" fill="#7A7A7A"/></svg></div></div>
<div class="fld" style="left:54px;top:485px;width:109px;height:19px;background:#fff"><div class="ft" style="text-align:left;padding-left:0px"></div></div>
<div class="fld" style="left:163px;top:485px;width:78px;height:19px;background:#fff"><div class="ft" style="text-align:left;padding-left:0px"></div></div>
<div class="fld" style="left:241px;top:485px;width:61px;height:19px;background:#fff"><div class="ft" style="text-align:left;padding-left:0px"></div></div>
<div class="fld" style="left:322px;top:485px;width:60px;height:19px;background:#fff"><div class="ft" style="text-align:left;padding-left:0px"></div></div>
<div class="fld" style="left:402px;top:485px;width:160px;height:19px;background:#fff"><div class="ft" style="text-align:left;padding-left:0px"></div></div>
<div class="fld" style="left:562px;top:485px;width:167px;height:19px;background:#fff"><div class="ft" style="text-align:left;padding-left:0px"></div></div>
<div class="fld" style="left:729px;top:485px;width:116px;height:19px;background:#fff"><div class="ft" style="text-align:left;padding-left:0px"></div></div>
<div class="fld" style="left:845px;top:485px;width:194px;height:19px;background:#fff"><div class="ft" style="text-align:left;padding-left:0px"></div></div>
<div class="fld" style="left:1039px;top:485px;width:46px;height:19px;background:#fff"><div class="ft" style="text-align:left;padding-left:0px"></div></div>
<div class="fld" style="left:1085px;top:485px;width:90px;height:19px;background:#fff"><div class="ft" style="text-align:left;padding-left:0px"></div></div>
<div class="fld" style="left:1175px;top:485px;width:67px;height:19px;background:#fff"><div class="ft" style="text-align:left;padding-left:0px"></div></div>
<div style="left:305px;top:487px;width:16px;height:15px;border:2px solid #0A5A80;border-top-width:1.5px;border-right-width:1.5px;border-radius:2px;background:#F6F6F6"><div style="left:0;top:0;width:13px;height:13px"><div style="left:1px;top:1px;width:10px;height:8px;background:#CCCCCC"></div><svg style="left:2px;top:2px" width="8" height="6"><path d="M0.5 0v6M3 0v6M5.5 0v6M8 0v6" stroke="#E8E8E8" stroke-width="0.6" stroke-dasharray="1 1"/></svg><svg style="left:5px;top:7px" width="8" height="5"><path d="M0 5L4 0.5L8 5Z" fill="#7A7A7A"/></svg></div></div>
<div style="left:385px;top:487px;width:16px;height:15px;border:2px solid #0A5A80;border-top-width:1.5px;border-right-width:1.5px;border-radius:2px;background:#F6F6F6"><div style="left:0;top:0;width:13px;height:13px"><div style="left:1px;top:1px;width:10px;height:8px;background:#CCCCCC"></div><svg style="left:2px;top:2px" width="8" height="6"><path d="M0.5 0v6M3 0v6M5.5 0v6M8 0v6" stroke="#E8E8E8" stroke-width="0.6" stroke-dasharray="1 1"/></svg><svg style="left:5px;top:7px" width="8" height="5"><path d="M0 5L4 0.5L8 5Z" fill="#7A7A7A"/></svg></div></div>
<div class="fld" style="left:54px;top:504px;width:109px;height:19px;background:#fff"><div class="ft" style="text-align:left;padding-left:0px"></div></div>
<div class="fld" style="left:163px;top:504px;width:78px;height:19px;background:#fff"><div class="ft" style="text-align:left;padding-left:0px"></div></div>
<div class="fld" style="left:241px;top:504px;width:61px;height:19px;background:#fff"><div class="ft" style="text-align:left;padding-left:0px"></div></div>
<div class="fld" style="left:322px;top:504px;width:60px;height:19px;background:#fff"><div class="ft" style="text-align:left;padding-left:0px"></div></div>
<div class="fld" style="left:402px;top:504px;width:160px;height:19px;background:#fff"><div class="ft" style="text-align:left;padding-left:0px"></div></div>
<div class="fld" style="left:562px;top:504px;width:167px;height:19px;background:#fff"><div class="ft" style="text-align:left;padding-left:0px"></div></div>
<div class="fld" style="left:729px;top:504px;width:116px;height:19px;background:#fff"><div class="ft" style="text-align:left;padding-left:0px"></div></div>
<div class="fld" style="left:845px;top:504px;width:194px;height:19px;background:#fff"><div class="ft" style="text-align:left;padding-left:0px"></div></div>
<div class="fld" style="left:1039px;top:504px;width:46px;height:19px;background:#fff"><div class="ft" style="text-align:left;padding-left:0px"></div></div>
<div class="fld" style="left:1085px;top:504px;width:90px;height:19px;background:#fff"><div class="ft" style="text-align:left;padding-left:0px"></div></div>
<div class="fld" style="left:1175px;top:504px;width:67px;height:19px;background:#fff"><div class="ft" style="text-align:left;padding-left:0px"></div></div>
<div style="left:305px;top:506px;width:16px;height:15px;border:2px solid #0A5A80;border-top-width:1.5px;border-right-width:1.5px;border-radius:2px;background:#F6F6F6"><div style="left:0;top:0;width:13px;height:13px"><div style="left:1px;top:1px;width:10px;height:8px;background:#CCCCCC"></div><svg style="left:2px;top:2px" width="8" height="6"><path d="M0.5 0v6M3 0v6M5.5 0v6M8 0v6" stroke="#E8E8E8" stroke-width="0.6" stroke-dasharray="1 1"/></svg><svg style="left:5px;top:7px" width="8" height="5"><path d="M0 5L4 0.5L8 5Z" fill="#7A7A7A"/></svg></div></div>
<div style="left:385px;top:506px;width:16px;height:15px;border:2px solid #0A5A80;border-top-width:1.5px;border-right-width:1.5px;border-radius:2px;background:#F6F6F6"><div style="left:0;top:0;width:13px;height:13px"><div style="left:1px;top:1px;width:10px;height:8px;background:#CCCCCC"></div><svg style="left:2px;top:2px" width="8" height="6"><path d="M0.5 0v6M3 0v6M5.5 0v6M8 0v6" stroke="#E8E8E8" stroke-width="0.6" stroke-dasharray="1 1"/></svg><svg style="left:5px;top:7px" width="8" height="5"><path d="M0 5L4 0.5L8 5Z" fill="#7A7A7A"/></svg></div></div>
<div class="fld" style="left:54px;top:523px;width:109px;height:18px;background:#fff"><div class="ft" style="text-align:left;padding-left:0px"></div></div>
<div class="fld" style="left:163px;top:523px;width:78px;height:18px;background:#fff"><div class="ft" style="text-align:left;padding-left:0px"></div></div>
<div class="fld" style="left:241px;top:523px;width:61px;height:18px;background:#fff"><div class="ft" style="text-align:left;padding-left:0px"></div></div>
<div class="fld" style="left:322px;top:523px;width:60px;height:18px;background:#fff"><div class="ft" style="text-align:left;padding-left:0px"></div></div>
<div class="fld" style="left:402px;top:523px;width:160px;height:18px;background:#fff"><div class="ft" style="text-align:left;padding-left:0px"></div></div>
<div class="fld" style="left:562px;top:523px;width:167px;height:18px;background:#fff"><div class="ft" style="text-align:left;padding-left:0px"></div></div>
<div class="fld" style="left:729px;top:523px;width:116px;height:18px;background:#fff"><div class="ft" style="text-align:left;padding-left:0px"></div></div>
<div class="fld" style="left:845px;top:523px;width:194px;height:18px;background:#fff"><div class="ft" style="text-align:left;padding-left:0px"></div></div>
<div class="fld" style="left:1039px;top:523px;width:46px;height:18px;background:#fff"><div class="ft" style="text-align:left;padding-left:0px"></div></div>
<div class="fld" style="left:1085px;top:523px;width:90px;height:18px;background:#fff"><div class="ft" style="text-align:left;padding-left:0px"></div></div>
<div class="fld" style="left:1175px;top:523px;width:67px;height:18px;background:#fff"><div class="ft" style="text-align:left;padding-left:0px"></div></div>
<div style="left:305px;top:525px;width:16px;height:15px;border:2px solid #0A5A80;border-top-width:1.5px;border-right-width:1.5px;border-radius:2px;background:#F6F6F6"><div style="left:0;top:0;width:13px;height:13px"><div style="left:1px;top:1px;width:10px;height:8px;background:#CCCCCC"></div><svg style="left:2px;top:2px" width="8" height="6"><path d="M0.5 0v6M3 0v6M5.5 0v6M8 0v6" stroke="#E8E8E8" stroke-width="0.6" stroke-dasharray="1 1"/></svg><svg style="left:5px;top:7px" width="8" height="5"><path d="M0 5L4 0.5L8 5Z" fill="#7A7A7A"/></svg></div></div>
<div style="left:385px;top:525px;width:16px;height:15px;border:2px solid #0A5A80;border-top-width:1.5px;border-right-width:1.5px;border-radius:2px;background:#F6F6F6"><div style="left:0;top:0;width:13px;height:13px"><div style="left:1px;top:1px;width:10px;height:8px;background:#CCCCCC"></div><svg style="left:2px;top:2px" width="8" height="6"><path d="M0.5 0v6M3 0v6M5.5 0v6M8 0v6" stroke="#E8E8E8" stroke-width="0.6" stroke-dasharray="1 1"/></svg><svg style="left:5px;top:7px" width="8" height="5"><path d="M0 5L4 0.5L8 5Z" fill="#7A7A7A"/></svg></div></div>
<div class="fld" style="left:54px;top:541px;width:109px;height:19px;background:#fff"><div class="ft" style="text-align:left;padding-left:0px"></div></div>
<div class="fld" style="left:163px;top:541px;width:78px;height:19px;background:#fff"><div class="ft" style="text-align:left;padding-left:0px"></div></div>
<div class="fld" style="left:241px;top:541px;width:61px;height:19px;background:#fff"><div class="ft" style="text-align:left;padding-left:0px"></div></div>
<div class="fld" style="left:322px;top:541px;width:60px;height:19px;background:#fff"><div class="ft" style="text-align:left;padding-left:0px"></div></div>
<div class="fld" style="left:402px;top:541px;width:160px;height:19px;background:#fff"><div class="ft" style="text-align:left;padding-left:0px"></div></div>
<div class="fld" style="left:562px;top:541px;width:167px;height:19px;background:#fff"><div class="ft" style="text-align:left;padding-left:0px"></div></div>
<div class="fld" style="left:729px;top:541px;width:116px;height:19px;background:#fff"><div class="ft" style="text-align:left;padding-left:0px"></div></div>
<div class="fld" style="left:845px;top:541px;width:194px;height:19px;background:#fff"><div class="ft" style="text-align:left;padding-left:0px"></div></div>
<div class="fld" style="left:1039px;top:541px;width:46px;height:19px;background:#fff"><div class="ft" style="text-align:left;padding-left:0px"></div></div>
<div class="fld" style="left:1085px;top:541px;width:90px;height:19px;background:#fff"><div class="ft" style="text-align:left;padding-left:0px"></div></div>
<div class="fld" style="left:1175px;top:541px;width:67px;height:19px;background:#fff"><div class="ft" style="text-align:left;padding-left:0px"></div></div>
<div style="left:305px;top:543px;width:16px;height:15px;border:2px solid #0A5A80;border-top-width:1.5px;border-right-width:1.5px;border-radius:2px;background:#F6F6F6"><div style="left:0;top:0;width:13px;height:13px"><div style="left:1px;top:1px;width:10px;height:8px;background:#CCCCCC"></div><svg style="left:2px;top:2px" width="8" height="6"><path d="M0.5 0v6M3 0v6M5.5 0v6M8 0v6" stroke="#E8E8E8" stroke-width="0.6" stroke-dasharray="1 1"/></svg><svg style="left:5px;top:7px" width="8" height="5"><path d="M0 5L4 0.5L8 5Z" fill="#7A7A7A"/></svg></div></div>
<div style="left:385px;top:543px;width:16px;height:15px;border:2px solid #0A5A80;border-top-width:1.5px;border-right-width:1.5px;border-radius:2px;background:#F6F6F6"><div style="left:0;top:0;width:13px;height:13px"><div style="left:1px;top:1px;width:10px;height:8px;background:#CCCCCC"></div><svg style="left:2px;top:2px" width="8" height="6"><path d="M0.5 0v6M3 0v6M5.5 0v6M8 0v6" stroke="#E8E8E8" stroke-width="0.6" stroke-dasharray="1 1"/></svg><svg style="left:5px;top:7px" width="8" height="5"><path d="M0 5L4 0.5L8 5Z" fill="#7A7A7A"/></svg></div></div>
<div class="fld" style="left:54px;top:560px;width:109px;height:19px;background:#fff"><div class="ft" style="text-align:left;padding-left:0px"></div></div>
<div class="fld" style="left:163px;top:560px;width:78px;height:19px;background:#fff"><div class="ft" style="text-align:left;padding-left:0px"></div></div>
<div class="fld" style="left:241px;top:560px;width:61px;height:19px;background:#fff"><div class="ft" style="text-align:left;padding-left:0px"></div></div>
<div class="fld" style="left:322px;top:560px;width:60px;height:19px;background:#fff"><div class="ft" style="text-align:left;padding-left:0px"></div></div>
<div class="fld" style="left:402px;top:560px;width:160px;height:19px;background:#fff"><div class="ft" style="text-align:left;padding-left:0px"></div></div>
<div class="fld" style="left:562px;top:560px;width:167px;height:19px;background:#fff"><div class="ft" style="text-align:left;padding-left:0px"></div></div>
<div class="fld" style="left:729px;top:560px;width:116px;height:19px;background:#fff"><div class="ft" style="text-align:left;padding-left:0px"></div></div>
<div class="fld" style="left:845px;top:560px;width:194px;height:19px;background:#fff"><div class="ft" style="text-align:left;padding-left:0px"></div></div>
<div class="fld" style="left:1039px;top:560px;width:46px;height:19px;background:#fff"><div class="ft" style="text-align:left;padding-left:0px"></div></div>
<div class="fld" style="left:1085px;top:560px;width:90px;height:19px;background:#fff"><div class="ft" style="text-align:left;padding-left:0px"></div></div>
<div class="fld" style="left:1175px;top:560px;width:67px;height:19px;background:#fff"><div class="ft" style="text-align:left;padding-left:0px"></div></div>
<div style="left:305px;top:562px;width:16px;height:15px;border:2px solid #0A5A80;border-top-width:1.5px;border-right-width:1.5px;border-radius:2px;background:#F6F6F6"><div style="left:0;top:0;width:13px;height:13px"><div style="left:1px;top:1px;width:10px;height:8px;background:#CCCCCC"></div><svg style="left:2px;top:2px" width="8" height="6"><path d="M0.5 0v6M3 0v6M5.5 0v6M8 0v6" stroke="#E8E8E8" stroke-width="0.6" stroke-dasharray="1 1"/></svg><svg style="left:5px;top:7px" width="8" height="5"><path d="M0 5L4 0.5L8 5Z" fill="#7A7A7A"/></svg></div></div>
<div style="left:385px;top:562px;width:16px;height:15px;border:2px solid #0A5A80;border-top-width:1.5px;border-right-width:1.5px;border-radius:2px;background:#F6F6F6"><div style="left:0;top:0;width:13px;height:13px"><div style="left:1px;top:1px;width:10px;height:8px;background:#CCCCCC"></div><svg style="left:2px;top:2px" width="8" height="6"><path d="M0.5 0v6M3 0v6M5.5 0v6M8 0v6" stroke="#E8E8E8" stroke-width="0.6" stroke-dasharray="1 1"/></svg><svg style="left:5px;top:7px" width="8" height="5"><path d="M0 5L4 0.5L8 5Z" fill="#7A7A7A"/></svg></div></div>
<div class="fld" style="left:54px;top:579px;width:109px;height:18px;background:#fff"><div class="ft" style="text-align:left;padding-left:0px"></div></div>
<div class="fld" style="left:163px;top:579px;width:78px;height:18px;background:#fff"><div class="ft" style="text-align:left;padding-left:0px"></div></div>
<div class="fld" style="left:241px;top:579px;width:61px;height:18px;background:#fff"><div class="ft" style="text-align:left;padding-left:0px"></div></div>
<div class="fld" style="left:322px;top:579px;width:60px;height:18px;background:#fff"><div class="ft" style="text-align:left;padding-left:0px"></div></div>
<div class="fld" style="left:402px;top:579px;width:160px;height:18px;background:#fff"><div class="ft" style="text-align:left;padding-left:0px"></div></div>
<div class="fld" style="left:562px;top:579px;width:167px;height:18px;background:#fff"><div class="ft" style="text-align:left;padding-left:0px"></div></div>
<div class="fld" style="left:729px;top:579px;width:116px;height:18px;background:#fff"><div class="ft" style="text-align:left;padding-left:0px"></div></div>
<div class="fld" style="left:845px;top:579px;width:194px;height:18px;background:#fff"><div class="ft" style="text-align:left;padding-left:0px"></div></div>
<div class="fld" style="left:1039px;top:579px;width:46px;height:18px;background:#fff"><div class="ft" style="text-align:left;padding-left:0px"></div></div>
<div class="fld" style="left:1085px;top:579px;width:90px;height:18px;background:#fff"><div class="ft" style="text-align:left;padding-left:0px"></div></div>
<div class="fld" style="left:1175px;top:579px;width:67px;height:18px;background:#fff"><div class="ft" style="text-align:left;padding-left:0px"></div></div>
<div style="left:305px;top:581px;width:16px;height:15px;border:2px solid #0A5A80;border-top-width:1.5px;border-right-width:1.5px;border-radius:2px;background:#F6F6F6"><div style="left:0;top:0;width:13px;height:13px"><div style="left:1px;top:1px;width:10px;height:8px;background:#CCCCCC"></div><svg style="left:2px;top:2px" width="8" height="6"><path d="M0.5 0v6M3 0v6M5.5 0v6M8 0v6" stroke="#E8E8E8" stroke-width="0.6" stroke-dasharray="1 1"/></svg><svg style="left:5px;top:7px" width="8" height="5"><path d="M0 5L4 0.5L8 5Z" fill="#7A7A7A"/></svg></div></div>
<div style="left:385px;top:581px;width:16px;height:15px;border:2px solid #0A5A80;border-top-width:1.5px;border-right-width:1.5px;border-radius:2px;background:#F6F6F6"><div style="left:0;top:0;width:13px;height:13px"><div style="left:1px;top:1px;width:10px;height:8px;background:#CCCCCC"></div><svg style="left:2px;top:2px" width="8" height="6"><path d="M0.5 0v6M3 0v6M5.5 0v6M8 0v6" stroke="#E8E8E8" stroke-width="0.6" stroke-dasharray="1 1"/></svg><svg style="left:5px;top:7px" width="8" height="5"><path d="M0 5L4 0.5L8 5Z" fill="#7A7A7A"/></svg></div></div>
<div class="fld" style="left:54px;top:597px;width:109px;height:19px;background:#fff"><div class="ft" style="text-align:left;padding-left:0px"></div></div>
<div class="fld" style="left:163px;top:597px;width:78px;height:19px;background:#fff"><div class="ft" style="text-align:left;padding-left:0px"></div></div>
<div class="fld" style="left:241px;top:597px;width:61px;height:19px;background:#fff"><div class="ft" style="text-align:left;padding-left:0px"></div></div>
<div class="fld" style="left:322px;top:597px;width:60px;height:19px;background:#fff"><div class="ft" style="text-align:left;padding-left:0px"></div></div>
<div class="fld" style="left:402px;top:597px;width:160px;height:19px;background:#fff"><div class="ft" style="text-align:left;padding-left:0px"></div></div>
<div class="fld" style="left:562px;top:597px;width:167px;height:19px;background:#fff"><div class="ft" style="text-align:left;padding-left:0px"></div></div>
<div class="fld" style="left:729px;top:597px;width:116px;height:19px;background:#fff"><div class="ft" style="text-align:left;padding-left:0px"></div></div>
<div class="fld" style="left:845px;top:597px;width:194px;height:19px;background:#fff"><div class="ft" style="text-align:left;padding-left:0px"></div></div>
<div class="fld" style="left:1039px;top:597px;width:46px;height:19px;background:#fff"><div class="ft" style="text-align:left;padding-left:0px"></div></div>
<div class="fld" style="left:1085px;top:597px;width:90px;height:19px;background:#fff"><div class="ft" style="text-align:left;padding-left:0px"></div></div>
<div class="fld" style="left:1175px;top:597px;width:67px;height:19px;background:#fff"><div class="ft" style="text-align:left;padding-left:0px"></div></div>
<div style="left:305px;top:599px;width:16px;height:15px;border:2px solid #0A5A80;border-top-width:1.5px;border-right-width:1.5px;border-radius:2px;background:#F6F6F6"><div style="left:0;top:0;width:13px;height:13px"><div style="left:1px;top:1px;width:10px;height:8px;background:#CCCCCC"></div><svg style="left:2px;top:2px" width="8" height="6"><path d="M0.5 0v6M3 0v6M5.5 0v6M8 0v6" stroke="#E8E8E8" stroke-width="0.6" stroke-dasharray="1 1"/></svg><svg style="left:5px;top:7px" width="8" height="5"><path d="M0 5L4 0.5L8 5Z" fill="#7A7A7A"/></svg></div></div>
<div style="left:385px;top:599px;width:16px;height:15px;border:2px solid #0A5A80;border-top-width:1.5px;border-right-width:1.5px;border-radius:2px;background:#F6F6F6"><div style="left:0;top:0;width:13px;height:13px"><div style="left:1px;top:1px;width:10px;height:8px;background:#CCCCCC"></div><svg style="left:2px;top:2px" width="8" height="6"><path d="M0.5 0v6M3 0v6M5.5 0v6M8 0v6" stroke="#E8E8E8" stroke-width="0.6" stroke-dasharray="1 1"/></svg><svg style="left:5px;top:7px" width="8" height="5"><path d="M0 5L4 0.5L8 5Z" fill="#7A7A7A"/></svg></div></div>
<div class="fld" style="left:54px;top:616px;width:109px;height:19px;background:#fff"><div class="ft" style="text-align:left;padding-left:0px"></div></div>
<div class="fld" style="left:163px;top:616px;width:78px;height:19px;background:#fff"><div class="ft" style="text-align:left;padding-left:0px"></div></div>
<div class="fld" style="left:241px;top:616px;width:61px;height:19px;background:#fff"><div class="ft" style="text-align:left;padding-left:0px"></div></div>
<div class="fld" style="left:322px;top:616px;width:60px;height:19px;background:#fff"><div class="ft" style="text-align:left;padding-left:0px"></div></div>
<div class="fld" style="left:402px;top:616px;width:160px;height:19px;background:#fff"><div class="ft" style="text-align:left;padding-left:0px"></div></div>
<div class="fld" style="left:562px;top:616px;width:167px;height:19px;background:#fff"><div class="ft" style="text-align:left;padding-left:0px"></div></div>
<div class="fld" style="left:729px;top:616px;width:116px;height:19px;background:#fff"><div class="ft" style="text-align:left;padding-left:0px"></div></div>
<div class="fld" style="left:845px;top:616px;width:194px;height:19px;background:#fff"><div class="ft" style="text-align:left;padding-left:0px"></div></div>
<div class="fld" style="left:1039px;top:616px;width:46px;height:19px;background:#fff"><div class="ft" style="text-align:left;padding-left:0px"></div></div>
<div class="fld" style="left:1085px;top:616px;width:90px;height:19px;background:#fff"><div class="ft" style="text-align:left;padding-left:0px"></div></div>
<div class="fld" style="left:1175px;top:616px;width:67px;height:19px;background:#fff"><div class="ft" style="text-align:left;padding-left:0px"></div></div>
<div style="left:305px;top:618px;width:16px;height:15px;border:2px solid #0A5A80;border-top-width:1.5px;border-right-width:1.5px;border-radius:2px;background:#F6F6F6"><div style="left:0;top:0;width:13px;height:13px"><div style="left:1px;top:1px;width:10px;height:8px;background:#CCCCCC"></div><svg style="left:2px;top:2px" width="8" height="6"><path d="M0.5 0v6M3 0v6M5.5 0v6M8 0v6" stroke="#E8E8E8" stroke-width="0.6" stroke-dasharray="1 1"/></svg><svg style="left:5px;top:7px" width="8" height="5"><path d="M0 5L4 0.5L8 5Z" fill="#7A7A7A"/></svg></div></div>
<div style="left:385px;top:618px;width:16px;height:15px;border:2px solid #0A5A80;border-top-width:1.5px;border-right-width:1.5px;border-radius:2px;background:#F6F6F6"><div style="left:0;top:0;width:13px;height:13px"><div style="left:1px;top:1px;width:10px;height:8px;background:#CCCCCC"></div><svg style="left:2px;top:2px" width="8" height="6"><path d="M0.5 0v6M3 0v6M5.5 0v6M8 0v6" stroke="#E8E8E8" stroke-width="0.6" stroke-dasharray="1 1"/></svg><svg style="left:5px;top:7px" width="8" height="5"><path d="M0 5L4 0.5L8 5Z" fill="#7A7A7A"/></svg></div></div>
<div style="left:1242px;top:275px;width:15px;height:345px;background:#D0D0D0;border-left:1px solid #0A5A80;border-right:1px solid #0A5A80"></div>
<div style="left:1243px;top:261px;width:14px;height:15px;background:#D0D0D0;border-top:1px solid #fff;border-left:1px solid #fff;border-radius:7px 7px 0 0"></div>
<div style="left:1243px;top:275px;width:14px;height:1px;background:#5A6A90"></div>
<div style="left:1243px;top:619px;width:14px;height:1px;background:#22304A"></div>
<div style="left:1243px;top:620px;width:14px;height:15px;background:#D0D0D0;border-left:1px solid #fff;border-bottom:1px solid #9AA8BC;border-radius:0 0 7px 7px"></div>
<svg style="left:1245px;top:266px" width="10" height="6"><path d="M0 5.5L5 0.5L10 5.5Z" fill="#5A6A90"/></svg>
<svg style="left:1245px;top:625px" width="10" height="6"><path d="M0 0.5L5 5.5L10 0.5Z" fill="#5A6A90"/></svg>
<svg style="left:1246px;top:392px" width="10" height="96"><path d="M1 7.5l1.6 -1.6" stroke="#3A4A68" stroke-width="1"/><path d="M1 15.5l1.6 -1.6" stroke="#3A4A68" stroke-width="1"/><path d="M1 23.5l1.6 -1.6" stroke="#3A4A68" stroke-width="1"/><path d="M1 31.5l1.6 -1.6" stroke="#3A4A68" stroke-width="1"/><path d="M1 39.5l1.6 -1.6" stroke="#3A4A68" stroke-width="1"/><path d="M1 47.5l1.6 -1.6" stroke="#3A4A68" stroke-width="1"/><path d="M1 55.5l1.6 -1.6" stroke="#3A4A68" stroke-width="1"/><path d="M1 63.5l1.6 -1.6" stroke="#3A4A68" stroke-width="1"/><path d="M1 71.5l1.6 -1.6" stroke="#3A4A68" stroke-width="1"/><path d="M1 79.5l1.6 -1.6" stroke="#3A4A68" stroke-width="1"/><path d="M1 87.5l1.6 -1.6" stroke="#3A4A68" stroke-width="1"/><path d="M6 3.5l1.6 -1.6" stroke="#3A4A68" stroke-width="1"/><path d="M6 11.5l1.6 -1.6" stroke="#3A4A68" stroke-width="1"/><path d="M6 19.5l1.6 -1.6" stroke="#3A4A68" stroke-width="1"/><path d="M6 27.5l1.6 -1.6" stroke="#3A4A68" stroke-width="1"/><path d="M6 35.5l1.6 -1.6" stroke="#3A4A68" stroke-width="1"/><path d="M6 43.5l1.6 -1.6" stroke="#3A4A68" stroke-width="1"/><path d="M6 51.5l1.6 -1.6" stroke="#3A4A68" stroke-width="1"/><path d="M6 59.5l1.6 -1.6" stroke="#3A4A68" stroke-width="1"/><path d="M6 67.5l1.6 -1.6" stroke="#3A4A68" stroke-width="1"/><path d="M6 75.5l1.6 -1.6" stroke="#3A4A68" stroke-width="1"/><path d="M6 83.5l1.6 -1.6" stroke="#3A4A68" stroke-width="1"/><path d="M6 91.5l1.6 -1.6" stroke="#3A4A68" stroke-width="1"/></svg>
<div class="tb" style="top:109px"><div class="lb" style="left:0;right:0;top:1px;text-align:center;color:#fff;font-size:17px;line-height:18px;text-shadow:none">?</div></div>
<div class="tb" style="top:220px"><svg style="left:3px;top:1px" width="16" height="19"><path d="M4.5 4.5Q8 1 11.5 4.5Z" fill="#fff" stroke="#fff" stroke-width="1"/><path d="M3 5h10" stroke="#fff" stroke-width="1.6"/><path d="M4 6.5h8l-0.6 9.5h-6.8z" fill="#DCEAF2"/><path d="M6.5 8v7M9.5 8v7" stroke="#2A5A80" stroke-width="1"/></svg></div>
<div class="tb" style="top:248px"><svg style="left:3px;top:3px" width="16" height="16"><path d="M8 2L14 8H10.5V13H5.5V8H2Z" fill="#fff"/></svg></div>
<div class="tb" style="top:276px"><svg style="left:3px;top:3px" width="16" height="16"><path d="M8 14L14 8H10.5V3H5.5V8H2Z" fill="#fff"/></svg></div>
<div class="tb" style="top:304px"><svg style="left:3px;top:3px" width="16" height="16"><path d="M2 11L8 5L14 11Z" fill="#fff"/></svg></div>
<div class="tb" style="top:332px"><svg style="left:3px;top:3px" width="16" height="16"><path d="M2 5L8 11L14 5Z" fill="#fff"/></svg></div>
<div class="tb" style="top:359px"><svg style="left:3px;top:3px" width="16" height="16"><path d="M2 8L8 3V6H13V10.5H8V13.5Z" fill="#fff"/></svg></div>
<div class="tb" style="top:387px"><svg style="left:3px;top:3px" width="16" height="16"><path d="M14 8L8 3V6H3V10.5H8V13.5Z" fill="#fff"/></svg></div>
<div class="tb" style="top:471px"><svg style="left:1px;top:2px" width="18" height="18"><path d="M6.5 5.5H12A3.6 3.6 0 0 1 12 12.7H6" fill="none" stroke="#fff" stroke-width="2.2"/><path d="M1.5 5L8 1V9Z" fill="#fff"/></svg></div>
<div class="btn" style="left:8px;top:651px;width:210px;height:18px">F1=Βοήθεια</div>
<div class="btn" style="left:8px;top:671px;width:210px;height:18px">F7=Διακίνηση</div>
<div class="btn" style="left:220px;top:651px;width:210px;height:18px">F2=Εξόφληση Χ/Ε</div>
<div class="btn" style="left:220px;top:671px;width:210px;height:18px">F8=Αναζήτηση</div>
<div class="btn" style="left:432px;top:651px;width:210px;height:18px">F3=Νέα Αναζήτηση</div>
<div class="btn" style="left:432px;top:671px;width:210px;height:18px"></div>
<div class="btn" style="left:644px;top:651px;width:210px;height:18px">F4=Διαγραφή</div>
<div class="btn" style="left:644px;top:671px;width:210px;height:18px"></div>
<div class="btn" style="left:856px;top:651px;width:210px;height:18px"></div>
<div class="btn" style="left:856px;top:671px;width:210px;height:18px"></div>
<div class="btn" style="left:1068px;top:651px;width:202px;height:18px">F6=Μεταβολή Επιταγής</div>
<div class="btn" style="left:1068px;top:671px;width:202px;height:18px">Esc=Τέλος</div>
<div style="left:4px;top:694px;width:1272px;height:26px;background:#fff"></div>
<div style="left:20px;top:693px;width:640px;height:26px;background:radial-gradient(ellipse at 50% 20%,rgba(0,0,0,0.07),rgba(0,0,0,0) 70%)"></div>
<div style="left:4px;top:720px;width:1272px;height:44px;background:#696969"></div>
<div style="left:8px;top:720px;width:1265px;height:38px;border:1px solid #22334A;border-radius:8px"></div>
<div style="left:14px;top:739px;width:1252px;height:1px;background:#22334A"></div>
<div style="left:1258px;top:722px;width:1px;height:17px;background:#22334A"></div>
<div style="left:147px;top:740px;width:1px;height:17px;background:#22334A"></div>
<div style="left:175px;top:740px;width:1px;height:17px;background:#22334A"></div>
<div style="left:325px;top:740px;width:1px;height:17px;background:#22334A"></div>
<div style="left:401px;top:740px;width:1px;height:17px;background:#22334A"></div>
<div style="left:457px;top:740px;width:1px;height:17px;background:#22334A"></div>
<div class="menu" style="left:14px;top:724px;">Αριθμός Επιταγής</div>
<div class="menu" style="left:14px;top:742px;">Εγγραφή: 1/1</div>
<div class="menu" style="left:465px;top:742px;">&lt;OSC&gt;</div>
<div style="left:753px;top:517px;width:80px;height:21px;background:#FFFFE1;border:1px solid #000;border-radius:3px;box-shadow:1px 1px 0 #3A4A6A"></div>
<div class="menu" style="left:756px;top:521px;color:#000;font-size:11px;letter-spacing:-0.2px;top:522px">Ποσό Επιταγής</div>
</body></html>
